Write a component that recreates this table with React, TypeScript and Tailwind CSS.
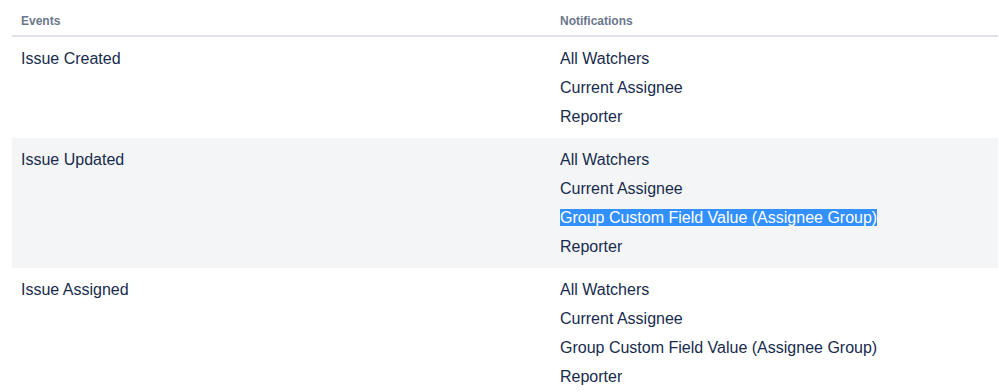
import React from 'react';

type EventRow = { event: string; notifications: string[]; selected?: number };

const rows: EventRow[] = [
  { event: 'Issue Created', notifications: ['All Watchers', 'Current Assignee', 'Reporter'] },
  {
    event: 'Issue Updated',
    notifications: ['All Watchers', 'Current Assignee', 'Group Custom Field Value (Assignee Group)', 'Reporter'],
    selected: 2,
  },
  {
    event: 'Issue Assigned',
    notifications: ['All Watchers', 'Current Assignee', 'Group Custom Field Value (Assignee Group)', 'Reporter'],
  },
];

export default function App() {
  return (
    <div className="h-[392px] w-[999px] overflow-hidden bg-white font-['Segoe_UI','Liberation_Sans',sans-serif] text-[#172b4d]">
      <div className="ml-3 mr-px">
        {/* header */}
        <div className="grid h-[37px] grid-cols-[548px_1fr] border-b-2 border-[#dfe1e6] text-[12px] font-semibold text-[#6b778c]">
          <div className="pl-[9px] pt-[12px] leading-[18px]">Events</div>
          <div className="pt-[12px] leading-[18px]">Notifications</div>
        </div>

        {rows.map((row, i) => (
          <div
            key={row.event}
            className={`grid grid-cols-[548px_1fr] py-[7px] text-[16px] ${i % 2 === 1 ? 'bg-[#f4f5f7]' : 'bg-white'}`}
          >
            <div className="pl-[9px] leading-[29px]">{row.event}</div>
            <ul>
              {row.notifications.map((n, j) => (
                <li key={n} className="leading-[29px]">
                  {row.selected === j ? <span className="bg-[#3390ff] text-white">{n}</span> : n}
                </li>
              ))}
            </ul>
          </div>
        ))}
      </div>
    </div>
  );
}
